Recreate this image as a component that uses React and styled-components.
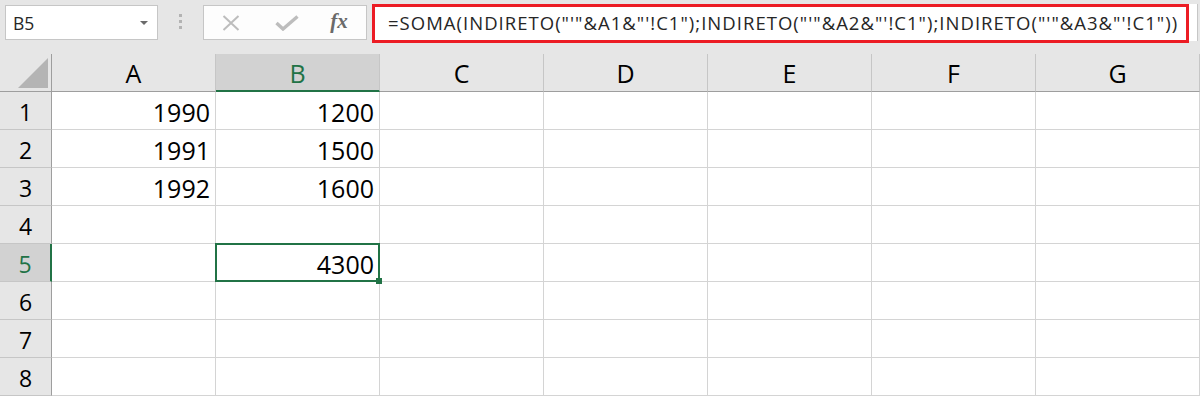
import React from "react";
import styled, { createGlobalStyle } from "styled-components";

const GlobalStyle = createGlobalStyle`
  html, body { margin: 0; padding: 0; background: #ffffff; }
  body { font-family: "Open Sans", "Liberation Sans", sans-serif; color: #000; overflow: hidden; }
`;

const Page = styled.div`
  width: 1200px;
  height: 396px;
  overflow: hidden;
  display: flex;
  flex-direction: column;
`;

const Toolbar = styled.div`
  height: 54px;
  flex: none;
  background: #e6e6e6;
  display: flex;
  align-items: flex-start;
  padding: 5px 2px 0 5px;
  box-sizing: border-box;
`;

const NameBox = styled.div`
  width: 153px;
  height: 35px;
  box-sizing: border-box;
  background: #ffffff;
  border: 1px solid #c6c6c6;
  display: flex;
  align-items: center;
  justify-content: space-between;
  padding: 0 9px 0 7px;
  font-size: 17.5px;
  color: #262626;
`;

const Caret = styled.span`
  width: 0;
  height: 0;
  border-left: 4px solid transparent;
  border-right: 4px solid transparent;
  border-top: 4px solid #6b6b6b;
  margin-top: 1px;
`;

const Grip = styled.div`
  width: 45px;
  display: flex;
  flex-direction: column;
  align-items: center;
  gap: 3px;
  padding-top: 9px;
  box-sizing: border-box;
`;

const GripDot = styled.span`
  width: 3px;
  height: 3px;
  background: #b3b3b3;
`;

const FormulaButtons = styled.div`
  width: 164px;
  height: 35px;
  box-sizing: border-box;
  background: #fdfdfd;
  border: 1px solid #c6c6c6;
  display: flex;
  align-items: center;
  padding: 0 0 0 17px;
`;

const IconSlot = styled.span`
  width: ${(p) => p.$w}px;
  margin-left: ${(p) => p.$gap || 0}px;
  display: flex;
  align-items: center;
  justify-content: center;
`;

const Fx = styled.span`
  font-family: "Liberation Serif", "DejaVu Serif", serif;
  font-style: italic;
  font-weight: bold;
  font-size: 21px;
  color: #6a6a6a;
  margin-top: -2px;
`;

const FormulaInput = styled.div`
  flex: 1;
  margin-left: 5px;
  height: 37px;
  margin-top: -1px;
  box-sizing: border-box;
  background: #ffffff;
  border-right: 1px solid #c6c6c6;
  position: relative;
  display: flex;
  align-items: center;
  padding-left: 16px;
  font-size: 18.5px;
  letter-spacing: 1.02px;
  color: #262626;
  white-space: nowrap;
`;

const Highlight = styled.span`
  position: absolute;
  left: 0;
  top: 0;
  width: 817px;
  height: 39px;
  box-sizing: border-box;
  border: 3px solid #ec1c24;
  pointer-events: none;
`;

const Sheet = styled.div`
  display: grid;
  grid-template-columns: 52px repeat(7, 164px);
  grid-auto-rows: 38px;
`;

const Corner = styled.div`
  background: #e6e6e6;
  border-right: 1px solid #9e9e9e;
  border-bottom: 1px solid #9e9e9e;
  box-sizing: border-box;
  display: flex;
  align-items: flex-end;
  justify-content: flex-end;
  padding: 0 3px 3px 0;
`;

const ColHeader = styled.div`
  box-sizing: border-box;
  background: ${(p) => (p.$active ? "#d2d2d2" : "#e6e6e6")};
  border-right: 1px solid #c6c6c6;
  border-bottom: ${(p) => (p.$active ? "2px solid #217346" : "1px solid #9e9e9e")};
  color: ${(p) => (p.$active ? "#217346" : "#000")};
  display: flex;
  align-items: center;
  justify-content: center;
  font-size: 25px;
  padding-top: ${(p) => (p.$active ? "2px" : "1px")};
`;

const RowHeader = styled.div`
  box-sizing: border-box;
  background: ${(p) => (p.$active ? "#d2d2d2" : "#e6e6e6")};
  border-right: ${(p) => (p.$active ? "2px solid #217346" : "1px solid #9e9e9e")};
  border-bottom: 1px solid #c6c6c6;
  color: ${(p) => (p.$active ? "#217346" : "#000")};
  display: flex;
  align-items: center;
  justify-content: center;
  font-size: 23px;
  padding-top: 3px;
`;

const Cell = styled.div`
  box-sizing: border-box;
  position: relative;
  border-right: 1px solid #d4d4d4;
  border-bottom: 1px solid #d4d4d4;
  text-align: right;
  padding: 3px 5px 0 0;
  font-size: 25px;
  line-height: 34px;
  color: #000;
`;

const Selection = styled.span`
  position: absolute;
  z-index: 2;
  left: -1px;
  top: -1px;
  right: -1px;
  bottom: -1px;
  border: 2px solid #217346;
  pointer-events: none;
`;

const FillHandle = styled.span`
  position: absolute;
  right: -4px;
  bottom: -4px;
  width: 6px;
  height: 6px;
  background: #217346;
`;

const columns = ["A", "B", "C", "D", "E", "F", "G"];
const data = {
  1: { A: "1990", B: "1200" },
  2: { A: "1991", B: "1500" },
  3: { A: "1992", B: "1600" },
  5: { B: "4300" },
};
const activeCol = "B";
const activeRow = 5;

const formula =
  "=SOMA(INDIRETO(\"'\"&A1&\"'!C1\");INDIRETO(\"'\"&A2&\"'!C1\");INDIRETO(\"'\"&A3&\"'!C1\"))";

export default function App() {
  return (
    <Page>
      <GlobalStyle />
      <Toolbar>
        <NameBox>
          <span>B5</span>
          <Caret />
        </NameBox>
        <Grip>
          <GripDot />
          <GripDot />
          <GripDot />
        </Grip>
        <FormulaButtons>
          <IconSlot $w={20}>
            <svg width="18" height="16" viewBox="0 0 18 16">
              <path d="M1.5 1 L16.5 15 M16.5 1 L1.5 15" stroke="#bdbdbd" strokeWidth="2" fill="none" />
            </svg>
          </IconSlot>
          <IconSlot $w={24} $gap={34}>
            <svg width="24" height="16" viewBox="0 0 24 16">
              <path d="M1.5 8 L8 14 L22.5 1.5" stroke="#bdbdbd" strokeWidth="3.4" fill="none" strokeLinejoin="miter" />
            </svg>
          </IconSlot>
          <IconSlot $w={22} $gap={29}>
            <Fx>fx</Fx>
          </IconSlot>
        </FormulaButtons>
        <FormulaInput>
          <Highlight />
          {formula}
        </FormulaInput>
      </Toolbar>
      <Sheet>
        <Corner>
          <svg width="30" height="30" viewBox="0 0 30 30">
            <polygon points="30,0 30,30 0,30" fill="#b4b4b4" />
          </svg>
        </Corner>
        {columns.map((c) => (
          <ColHeader key={c} $active={c === activeCol}>
            {c}
          </ColHeader>
        ))}
        {[1, 2, 3, 4, 5, 6, 7, 8].map((r) => (
          <React.Fragment key={r}>
            <RowHeader $active={r === activeRow}>{r}</RowHeader>
            {columns.map((c) => {
              const sel = r === activeRow && c === activeCol;
              return (
                <Cell key={c}>
                  {data[r] && data[r][c]}
                  {sel && (
                    <Selection>
                      <FillHandle />
                    </Selection>
                  )}
                </Cell>
              );
            })}
          </React.Fragment>
        ))}
      </Sheet>
    </Page>
  );
}
